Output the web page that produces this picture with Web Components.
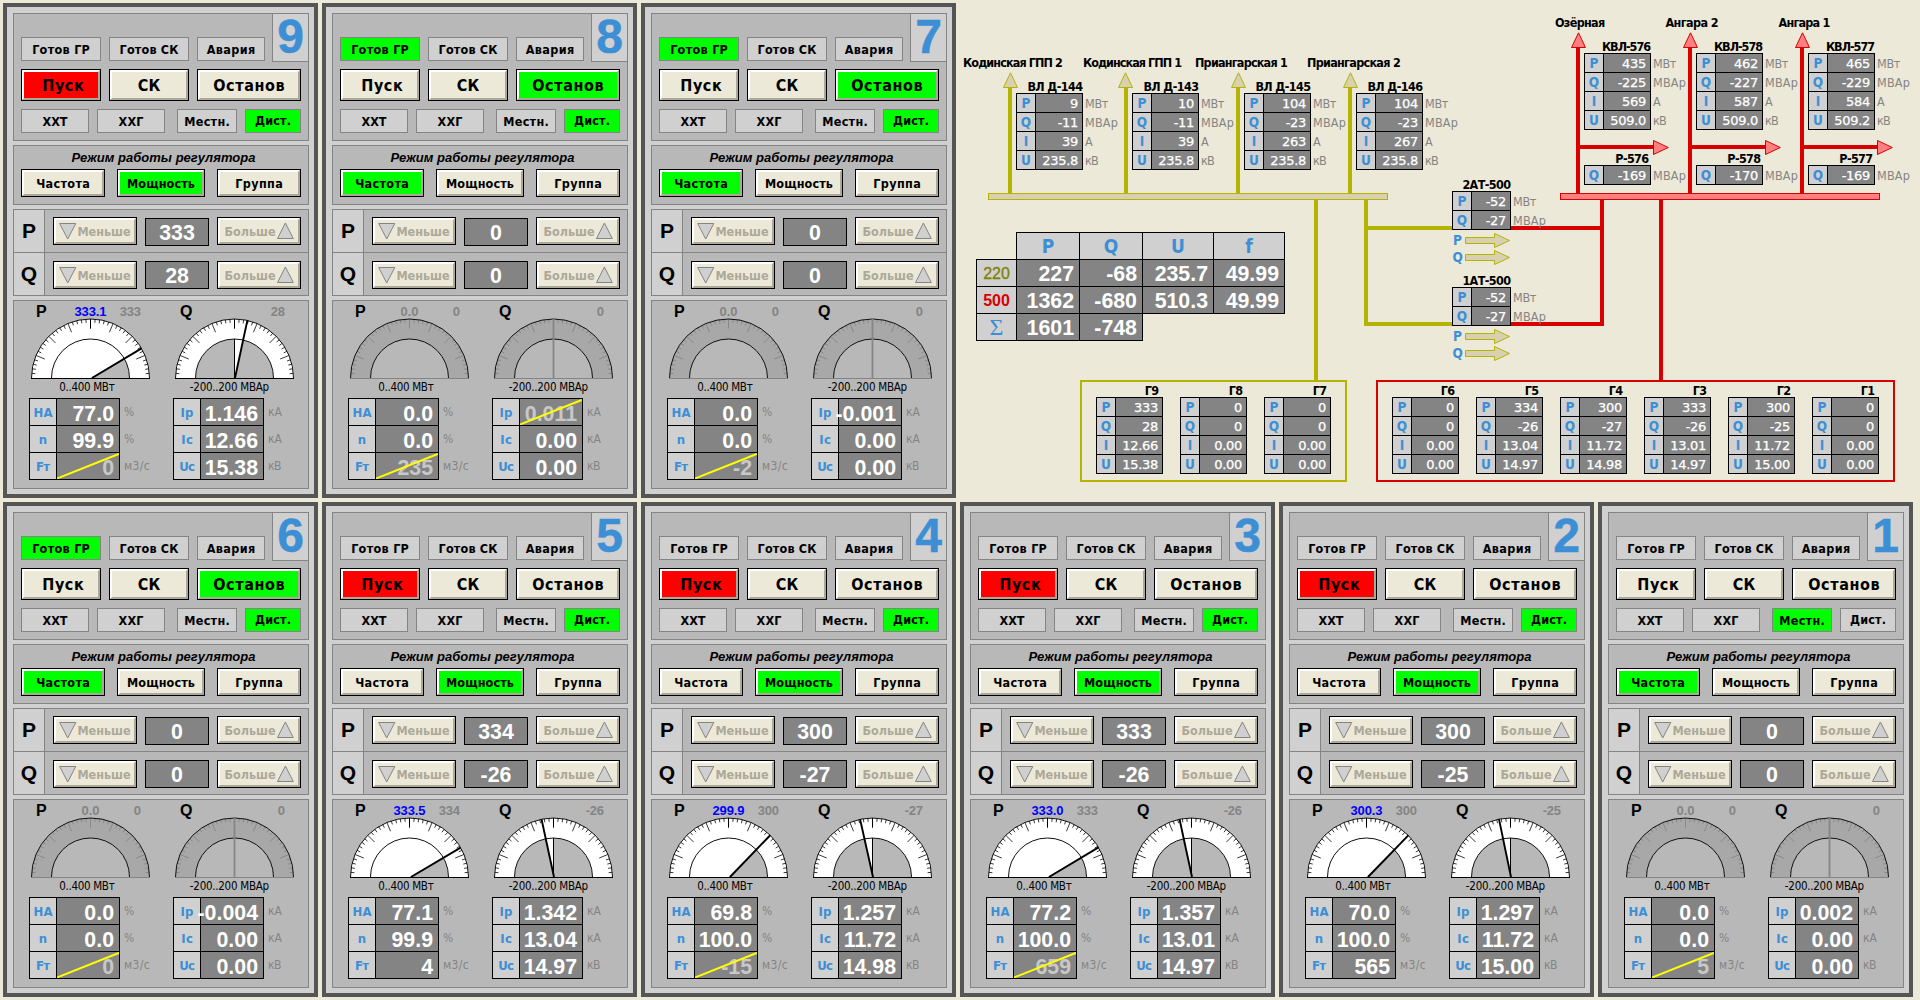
<!DOCTYPE html>
<html lang="ru">
<head>
<meta charset="utf-8">
<title>ГЭС — агрегаты</title>
<style>
html,body{margin:0;padding:0}
body{width:1920px;height:1000px;overflow:hidden;background:#ece9d8;font-family:"DejaVu Sans Condensed","DejaVu Sans",sans-serif;color:#000}
</style>
</head>
<body>
<station-board></station-board>
<script>
const ARIAL = '"Liberation Sans",Arial,sans-serif';
const make = (el, html) => { (el.shadowRoot || el.attachShadow({mode:'open'})).innerHTML = html; };

/* Text whose letter spacing is tuned so that it occupies w pixels */
class FitText extends HTMLElement {
  connectedCallback() {
    make(this, `<style>:host{display:inline-block;white-space:nowrap;line-height:1.2}span{display:inline-block;white-space:nowrap}</style><span><slot></slot></span>`);
    const w = parseFloat(this.getAttribute('w'));
    if (!w) return;
    const s = this.shadowRoot.querySelector('span');
    const now = s.getBoundingClientRect().width;
    const n = this.textContent.length;
    const ls = (w + 1 - now) / n;
    s.style.letterSpacing = ls.toFixed(3) + 'px';
    s.style.marginRight = (-ls).toFixed(3) + 'px';
  }
}
customElements.define('fit-text', FitText);

class StatusLamp extends HTMLElement {
  connectedCallback() {
    make(this, `<style>
      :host{display:flex;box-sizing:border-box;height:24px;align-items:center;justify-content:center;border:1px solid #848484;background:#d0d0d0;font-size:12.5px;font-weight:bold;padding-top:1px}
      :host([on]){background:#0f0}
    </style><slot></slot>`);
  }
}
customElements.define('status-lamp', StatusLamp);

class PushButton extends HTMLElement {
  connectedCallback() {
    make(this, `<style>
      :host{display:block;box-sizing:border-box;border:1px solid #000;font-weight:bold;font-size:12.5px}
      div{box-sizing:border-box;height:100%;display:flex;align-items:center;justify-content:center;border:2px solid;border-color:#fff #aca899 #aca899 #fff;background:#ece9d8}
      :host([big]) div{font-size:16px;padding-top:1px}
      :host([tone=green]) div{background:#0f0}
      :host([tone=red]) div{background:#f00}
      :host([off]) div{color:#aca899}
      :host([shift]) div{padding-left:4px}
    </style><div><slot></slot></div>`);
  }
}
customElements.define('push-button', PushButton);

class DialGauge extends HTMLElement {
  connectedCallback() {
    const kind = this.getAttribute('kind'), on = this.hasAttribute('on'), v = parseFloat(this.getAttribute('value'));
    const cx = 61.5, cy = 60, R = 59, r = 39;
    const pt = (a, q) => { const t = a * Math.PI / 180; return [(cx - q * Math.cos(t)).toFixed(2), (cy - q * Math.sin(t)).toFixed(2)]; };
    let ticks = '';
    for (let i = 1; i < 40; i++) {
      const major = i % 5 === 0, a = i * 4.5;
      ticks += `M${pt(a, R)}L${pt(a, R - (major ? 9.5 : 3.7))}`;
    }
    const ang = kind === 'p' ? v / 400 * 180 : 90 + v / 200 * 90;
    const a0 = kind === 'p' ? 0 : Math.min(90, ang), a1 = kind === 'p' ? ang : Math.max(90, ang);
    make(this, `<style>:host{display:block;width:124px;height:62px}svg{display:block}</style>
    <svg width="124" height="62" viewBox="0 0 124 62">
      <path d="M${cx-R} ${cy}A${R} ${R} 0 0 1 ${cx+R} ${cy}H${cx+r}A${r} ${r} 0 0 0 ${cx-r} ${cy}Z" fill="${on ? '#fff' : '#a8a8a8'}"/>
      ${on ? `<path d="M${cx} ${cy}L${pt(a0, r)}A${r} ${r} 0 0 1 ${pt(a1, r)}Z" fill="#fff"/>` : ''}
      <path d="${ticks}" stroke="${on ? '#222' : '#808080'}" stroke-width="${on ? .9 : .8}" fill="none"/>
      <path d="M${cx-R} ${cy}A${R} ${R} 0 0 1 ${cx+R} ${cy}M${cx-r} ${cy}A${r} ${r} 0 0 1 ${cx+r} ${cy}" fill="none" stroke="#111" stroke-width="1"/>
      <path d="M${cx-R-.5} ${cy+.5}H${cx+R+.5}" stroke="${on ? '#000' : '#848484'}"/>
      ${on ? `<path d="M${cx} 1V10.500${kind === 'q' ? 'M' + cx + ' 21V60' : ''}" stroke="#000" stroke-width="1"/>
      <path d="M${cx+(kind==='p'?1.500:.5)} ${cy}L${pt(ang, R)}" stroke="#000" stroke-width="1.900"/>`
      : kind === 'q' ? `<path d="M${cx} 1V60" stroke="#868686" stroke-width="1.800"/>` : ''}
    </svg>`);
  }
}
customElements.define('dial-gauge', DialGauge);

/* Measured quantities of a unit: label, value, engineering unit */
class MeterTable extends HTMLElement {
  set rows(rows) {
    make(this, `<style>
      :host{display:flex;gap:4px;font-size:12px;color:#848484}
      .t{box-sizing:border-box;width:91px;height:82px;background:#000;padding:1px;display:grid;grid-template-columns:26px 62px;grid-auto-rows:26px;gap:1px}
      .l{background:#d0d0d0;color:#3c8fd5;font-weight:bold;font-size:13px;display:flex;align-items:center;justify-content:center;padding-top:1px;box-sizing:border-box}
      .v{background:#848484;color:#fff;font:bold 21.33px/26px ${ARIAL};display:flex;justify-content:flex-end;padding:2px 5px 0 0;box-sizing:border-box;position:relative;white-space:nowrap}
      .bad{color:#c8c8c8}
      svg{position:absolute;left:0;top:0}
      .u{display:grid;grid-auto-rows:27px;align-items:center;padding-top:1px}
    </style>
    <div class="t">${rows.map(([l, v, , lw, , bad]) => `<div class="l"><fit-text w="${lw}">${l}</fit-text></div><div class="v${bad ? ' bad' : ''}">${v}${bad ? '<svg width="62" height="26"><path d="M0 25.500L62 .8" stroke="#ff0" stroke-width="2"/></svg>' : ''}</div>`).join('')}</div>
    <div class="u">${rows.map(r => `<fit-text w="${r[4]}">${r[2]}</fit-text>`).join('')}</div>`);
  }
}
customElements.define('meter-table', MeterTable);

class UnitPanel extends HTMLElement {
  set data(d) {
    const run = d.p > 0;
    const spin = (name, v, up) => `
      <div class="name">${name}</div>
      <div class="ctl ${up}">
        <push-button class="b84 h28" off><svg width="18" height="18"><path d="M.7 1.500H16.800L8.700 17Z" fill="#d0d0d0" stroke="#848484"/></svg><fit-text w="52">Меньше</fit-text></push-button>
        <div class="val">${v}</div>
        <push-button class="b84 h28" off><fit-text w="50">Больше</fit-text><svg width="18" height="18"><path d="M1.500 16.500H17.300L9.400 1Z" fill="#d0d0d0" stroke="#848484"/></svg></push-button>
      </div>`;
    make(this, `<style>
      :host{box-sizing:border-box;display:flex;flex-direction:column;gap:4px;flex:none;width:315px;height:495px;border:4px solid #555;background:#d0d0d0;padding:6px 5px 5px 6px}
      section{box-sizing:border-box;border:1px solid #848484;background:#b8b8b8;width:296px}
      .s1{height:128px;display:flex;flex-direction:column;gap:8px}
      .top{display:flex;height:47px;padding-left:7px}
      .row{display:flex;gap:8px;padding-left:7px}
      .top .row{padding:23px 7px 0 0}
      .num{box-sizing:border-box;width:36px;height:48px;border:1px solid #848484;border-width:0 0 1px 1px;background:#d0d0d0;color:#3c8fd5;font:bold 48px/46px ${ARIAL};text-align:center;-webkit-text-stroke:.5px #3c8fd5}
      .w80{width:80px}.w68{width:68px}.w60{width:60px}.w56{width:56px}.w104{width:104px}.b84{width:84px}.b88{width:88px}
      .h32{height:32px}.h28{height:28px}
      .gap{margin-left:4px}
      .up{padding-bottom:2px}
      .s2{height:60px}
      .mode{font:italic bold 13px/22px ${ARIAL};height:23px;text-align:center;padding:1px 0 0 5px;box-sizing:border-box}
      .modes{display:flex;gap:12px;padding-left:7px}
      .s3{height:87px;display:grid;grid-template-columns:30px 1fr;grid-template-rows:42px 42px;gap:1px;background:#848484}
      .name{background:#d0d0d0;font:bold 21px/41px ${ARIAL};text-align:center}
      .ctl{background:#b8b8b8;display:flex;gap:8px;padding:8px 0 0 8px}
      .ctl.p push-button{margin-top:-1px}
      .val{box-sizing:border-box;width:64px;height:28px;border:1px solid #000;background:#848484;color:#fff;font:bold 21.33px/28px ${ARIAL};text-align:center}
      .s4{height:189px;display:grid;grid-template-columns:144px 136px;padding-left:15px}
      .head{display:flex;align-items:flex-start;height:17px;padding-left:7px;font:bold 13px/21px ${ARIAL};color:#848484}
      .head b{width:38px;font-size:16px;color:#000;line-height:22px}
      .head div{width:33px;height:21px;display:flex;align-items:center;justify-content:center}
      .head i{font-style:normal;width:34px;height:21px;display:flex;align-items:center;justify-content:flex-end}
      .live{color:#00f}
      .cap{height:18px;font-size:11.5px;display:flex;width:116px;justify-content:center;box-sizing:border-box;padding-top:1px}
      .cap.q{width:113px}
    </style>
    <section class="s1">
      <div class="top"><div class="row">
        <status-lamp class="w80"${d.ready ? ' on' : ''}><fit-text w="57">Готов ГР</fit-text></status-lamp>
        <status-lamp class="w80"><fit-text w="58">Готов СК</fit-text></status-lamp>
        <status-lamp class="w68"><fit-text w="48">Авария</fit-text></status-lamp></div>
        <div class="num">${d.n}</div></div>
      <div class="row">
        <push-button class="w80 h32" big shift${run ? ' tone="red"' : ''}><fit-text w="41">Пуск</fit-text></push-button>
        <push-button class="w80 h32" big><fit-text w="22">СК</fit-text></push-button>
        <push-button class="w104 h32" big${d.ready ? ' tone="green"' : ''}><fit-text w="71">Останов</fit-text></push-button></div>
      <div class="row">
        <status-lamp class="w68"><fit-text w="24">ХХТ</fit-text></status-lamp>
        <status-lamp class="w68"><fit-text w="24">ХХГ</fit-text></status-lamp>
        <status-lamp class="w60 gap"${d.local ? ' on' : ''}><fit-text w="45">Местн.</fit-text></status-lamp>
        <status-lamp class="w56"${d.local ? '' : ' on'}><fit-text class="up" w="35">Дист.</fit-text></status-lamp></div>
    </section>
    <section class="s2">
      <div class="mode"><fit-text w="183">Режим работы регулятора</fit-text></div>
      <div class="modes">
        <push-button class="b84 h28"${run ? '' : ' tone="green"'}><fit-text w="53">Частота</fit-text></push-button>
        <push-button class="b88 h28"${run ? ' tone="green"' : ''}><fit-text w="67">Мощность</fit-text></push-button>
        <push-button class="b84 h28"><fit-text w="47">Группа</fit-text></push-button></div>
    </section>
    <section class="s3">${spin('P', d.p, 'p')}${spin('Q', d.q, 'q')}</section>
    <section class="s4">
      <div>
        <div class="head"><b>P</b><div class="${run ? 'live' : ''}"><fit-text w="${run ? 31 : 17}">${d.now}</fit-text></div><i><fit-text w="${run ? 20 : 6}">${d.p}</fit-text></i></div>
        <dial-gauge kind="p" value="${d.now}"${run ? ' on' : ''}></dial-gauge>
        <div class="cap"><fit-text w="54">0..400 МВт</fit-text></div>
        <meter-table id="a"></meter-table>
      </div>
      <div>
        <div class="head"><b>Q</b><div></div><i><fit-text w="${[0, 6, 13, 17][String(d.q).length]}">${d.q}</fit-text></i></div>
        <dial-gauge kind="q" value="${d.q}"${run ? ' on' : ''}></dial-gauge>
        <div class="cap q"><fit-text w="78">-200..200 МВАр</fit-text></div>
        <meter-table id="b"></meter-table>
      </div>
    </section>`);
    const $ = i => this.shadowRoot.getElementById(i);
    $('a').rows = [['НА', d.ha, '%', 18, 10], ['n', d.rpm, '%', 7, 10], ['Fт', d.ft, 'м3/с', 12, 25, d.ftBad]];
    $('b').rows = [['Iр', d.ip, 'кА', 12, 13, d.ipBad], ['Iс', d.ic, 'кА', 11, 13], ['Uс', d.uc, 'кВ', 14, 12]];
  }
}
customElements.define('unit-panel', UnitPanel);

/* Compact table of line or generator readings with its caption */
class LineTable extends HTMLElement {
  set data({title, tw, rows, width = 67, inset = 0}) {
    const U = {'МВт': 22, 'МВАр': 32, 'А': 7, 'кВ': 12};
    make(this, `<style>
      :host{display:block;width:${width}px}
      .c{box-sizing:border-box;font-weight:bold;font-size:12.5px;height:12px;line-height:12px;display:flex;justify-content:flex-end;padding:0 ${inset}px 1px 0;align-items:center}
      .b{display:flex;gap:2px;width:max-content}
      .t{box-sizing:border-box;width:${width}px;background:#000;padding:1px;display:grid;grid-template-columns:18px 1fr;grid-auto-rows:18px;gap:1px}
      .l{background:#d0d0d0;color:#3c8fd5;font-weight:bold;font-size:13.500px;line-height:19px;text-align:center}
      .v{background:#848484;color:#fff;font:13px/19px "DejaVu Sans",sans-serif;letter-spacing:-.3px;text-align:right;padding-right:4px;-webkit-text-stroke:.25px #fff}
      .u{color:#848484;font-size:12.5px;display:grid;grid-auto-rows:19px;align-items:center;padding-top:1px}
    </style>
    <div class="c"><fit-text w="${tw}">${title}</fit-text></div>
    <div class="b"><div class="t">${rows.map(r => `<div class="l">${r[0]}</div><div class="v">${r[1]}</div>`).join('')}</div>
    ${rows[0][2] ? `<div class="u">${rows.map(r => `<fit-text w="${U[r[2]]}">${r[2]}</fit-text>`).join('')}</div>` : ''}</div>`);
  }
}
customElements.define('line-table', LineTable);

class TotalsTable extends HTMLElement {
  connectedCallback() {
    make(this, `<style>
      :host{display:block;width:309px}
      .r{display:flex;gap:1px;padding:1px 1px 0;background:#000;width:max-content}
      .h{margin-left:40px}
      .end{padding-bottom:1px}
      .r div{height:26px;width:62px;box-sizing:border-box;background:#848484;color:#fff;font:bold 21.33px/29px ${ARIAL};text-align:right;padding-right:5px}
      .r .w{width:70px}
      .h div{background:#d0d0d0!important;color:#3c8fd5!important;text-align:center!important;font:bold 19px/27px "DejaVu Sans Condensed",sans-serif!important;padding:0!important}
      .r .k{width:39px;background:#d0d0d0;text-align:center;padding:0;font-size:16px;line-height:27px}
      .r .y{color:#808000;font-weight:normal;-webkit-text-stroke:.3px #808000}.r .z{color:#d80000}
      .r .s{color:#3c8fd5;font:24px/27px "Liberation Serif",serif}
      .last{display:flex}
      .last i{height:1px;background:#000;flex:1}
    </style>
    <div class="r h"><div>P</div><div>Q</div><div class="w">U</div><div class="w">f</div></div>
    <div class="r"><div class="k y">220</div><div>227</div><div>-68</div><div class="w">235.7</div><div class="w">49.99</div></div>
    <div class="r"><div class="k z">500</div><div>1362</div><div>-680</div><div class="w">510.3</div><div class="w">49.99</div></div>
    <div class="last"><div class="r end"><div class="k s">Σ</div><div>1601</div><div>-748</div></div><i></i></div>`);
  }
}
customElements.define('totals-table', TotalsTable);

/* Single-line diagram of the 220 and 500 kV switchyards, in board coordinates */
class PowerScheme extends HTMLElement {
  connectedCallback() {
    const Y = '#b4b400', YF = '#d8d0b0', R = '#d80000', RF = '#ff8080';
    const bar = (x, y, w, h, c) => `<rect x="${x}" y="${y}" width="${w}" height="${h}" fill="${c}"/>`;
    const tri = (x, y, f, c) => `<path d="M${x + .5} ${y + 15.5}H${x + 14.5}L${x + 7.5} ${y + .8}Z" fill="${f}" stroke="${c}"/>`;
    let g = '';
    for (const [l, a] of [[1008, 1003], [1124, 1118], [1236, 1231], [1348, 1343]]) g += bar(l, 88, 4, 105, Y) + tri(a, 72, YF, Y);
    g += bar(1314, 200, 4, 181, Y) + bar(1364, 200, 4, 126, Y) + bar(1364, 226, 90, 4, Y) + bar(1364, 322, 90, 4, Y);
    g += `<rect x="988.500" y="193.500" width="399" height="6" fill="${YF}" stroke="${Y}"/>`;
    for (const l of [1576, 1688, 1800]) g += bar(l, 48, 4, 145, R) + tri(l - 5, 32, RF, R) + bar(l, 145, 78, 4, R)
      + `<path d="M${l + 77.5} 140.500V154.500L${l + 92.3} 147.500Z" fill="${RF}" stroke="${R}"/>`;
    g += bar(1600, 200, 4, 126, R) + bar(1659, 200, 4, 181, R) + bar(1508, 226, 96, 4, R) + bar(1508, 322, 96, 4, R);
    g += `<rect x="1560.500" y="193.500" width="319" height="6" fill="${RF}" stroke="${R}"/>`;
    g += `<rect x="1081" y="381" width="265" height="100" fill="none" stroke="${Y}" stroke-width="2"/><rect x="1377" y="381" width="517" height="100" fill="none" stroke="${R}" stroke-width="2"/>`;
    for (const y of [240.5, 257.5, 336.5, 353.5]) g += `<path d="M1465.500 ${y - 3}H1494.500V${y - 7}L1509.500 ${y}L1494.500 ${y + 7}V${y + 3}H1465.500Z" fill="${YF}" stroke="${Y}"/>`;
    make(this, `<style>
      :host{display:block;position:relative;width:956px;height:495px;flex:none}
      svg{display:block}
      line-table,fit-text,totals-table{position:absolute}
      fit-text{font-weight:bold;font-size:12.5px;line-height:14px}
      .f{color:#3c8fd5;font-size:13.500px}
    </style><svg width="956" height="495" viewBox="960 3 956 495">${g}</svg>`);
    const put = (tag, x, y) => { const e = document.createElement(tag); e.style.left = x - 960 + 'px'; e.style.top = y - 3 + 'px'; return e; };
    const text = (t, x, cy, w, cls) => { const e = put('fit-text', x, cy - (cls ? 8 : 7)); e.textContent = t; if (w) e.setAttribute('w', w); if (cls) e.className = cls; this.shadowRoot.append(e); };
    const table = (x, y, data) => { const e = put('line-table', x, y - 12); this.shadowRoot.append(e); e.data = data; };
    text('Кодинская ГПП 2', 963, 63, 98); text('Кодинская ГПП 1', 1083, 63, 97);
    text('Приангарская 1', 1195, 63, 91); text('Приангарская 2', 1307, 63, 92);
    text('Озёрная', 1555, 23, 48.5); text('Ангара 2', 1665.5, 23, 51.5); text('Ангара 1', 1778.5, 23, 50);
    const L = (p, q, i, u) => [['P', p, 'МВт'], ['Q', q, 'МВАр'], ['I', i, 'А'], ['U', u, 'кВ']];
    [[1016, '144', 9, -11, 39], [1132, '143', 10, -11, 39], [1244, '145', 104, -23, 263], [1356, '146', 104, -23, 267]]
      .forEach(([x, n, p, q, i]) => table(x, 93, {title: 'ВЛ Д-' + n, tw: 54, rows: L(p, q, i, '235.8')}));
    [[1584, 576, 435, -225, 569, '509.0', -169], [1696, 578, 462, -227, 587, '509.0', -170], [1808, 577, 465, -229, 584, '509.2', -169]]
      .forEach(([x, n, p, q, i, u, r]) => {
        table(x, 53, {title: 'КВЛ-' + n, tw: 47, rows: L(p, q, i, u)});
        table(x, 165, {title: 'Р-' + n, tw: 32, inset: 2, rows: [['Q', r, 'МВАр']]});
      });
    for (const [t, y] of [['2АТ-500', 191], ['1АТ-500', 287]]) {
      table(1452, y, {title: t, tw: 47, width: 59, rows: [['P', -52, 'МВт'], ['Q', -27, 'МВАр']]});
      text('P', 1453, y + 50, 0, 'f'); text('Q', 1452.5, y + 67, 0, 'f');
    }
    [[1096, 9, 333, 28, '12.66', '15.38'], [1180, 8, 0, 0, '0.00', '0.00'], [1264, 7, 0, 0, '0.00', '0.00'],
     [1392, 6, 0, 0, '0.00', '0.00'], [1476, 5, 334, -26, '13.04', '14.97'], [1560, 4, 300, -27, '11.72', '14.98'],
     [1644, 3, 333, -26, '13.01', '14.97'], [1728, 2, 300, -25, '11.72', '15.00'], [1812, 1, 0, 0, '0.00', '0.00']]
      .forEach(([x, n, p, q, i, u]) => table(x, 397, {title: 'Г' + n, tw: 12.5, inset: 4, rows: [['P', p], ['Q', q], ['I', i], ['U', u]]}));
    this.shadowRoot.append(put('totals-table', 976, 232));
  }
}
customElements.define('power-scheme', PowerScheme);

const idle = {p: 0, q: 0, now: '0.0', ha: '0.0', rpm: '0.0', ftBad: 1, ic: '0.00', uc: '0.00'};
const UNITS = [
  {n: 9, p: 333, q: 28, now: '333.1', ha: '77.0', rpm: '99.9', ft: 0, ftBad: 1, ip: '1.146', ic: '12.66', uc: '15.38'},
  {...idle, n: 8, ready: 1, ft: 235, ip: '0.011', ipBad: 1},
  {...idle, n: 7, ready: 1, ft: -2, ip: '-0.001'},
  {...idle, n: 6, ready: 1, ft: 0, ip: '-0.004'},
  {n: 5, p: 334, q: -26, now: '333.5', ha: '77.1', rpm: '99.9', ft: 4, ip: '1.342', ic: '13.04', uc: '14.97'},
  {n: 4, p: 300, q: -27, now: '299.9', ha: '69.8', rpm: '100.0', ft: -15, ftBad: 1, ip: '1.257', ic: '11.72', uc: '14.98'},
  {n: 3, p: 333, q: -26, now: '333.0', ha: '77.2', rpm: '100.0', ft: 659, ftBad: 1, ip: '1.357', ic: '13.01', uc: '14.97'},
  {n: 2, p: 300, q: -25, now: '300.3', ha: '70.0', rpm: '100.0', ft: 565, ip: '1.297', ic: '11.72', uc: '15.00'},
  {...idle, n: 1, local: 1, ft: 5, ip: '0.002'}
];
class StationBoard extends HTMLElement {
  connectedCallback() {
    make(this, `<style>:host{display:flex;flex-direction:column;gap:4px;padding:3px}.r{display:flex;gap:4px}</style>
      <div class="r" id="t">${'<unit-panel></unit-panel>'.repeat(3)}<power-scheme></power-scheme></div>
      <div class="r" id="b">${'<unit-panel></unit-panel>'.repeat(6)}</div>`);
    this.shadowRoot.querySelectorAll('unit-panel').forEach((e, i) => { e.data = UNITS[i]; });
  }
}
customElements.define('station-board', StationBoard);
</script>
</body>
</html>
